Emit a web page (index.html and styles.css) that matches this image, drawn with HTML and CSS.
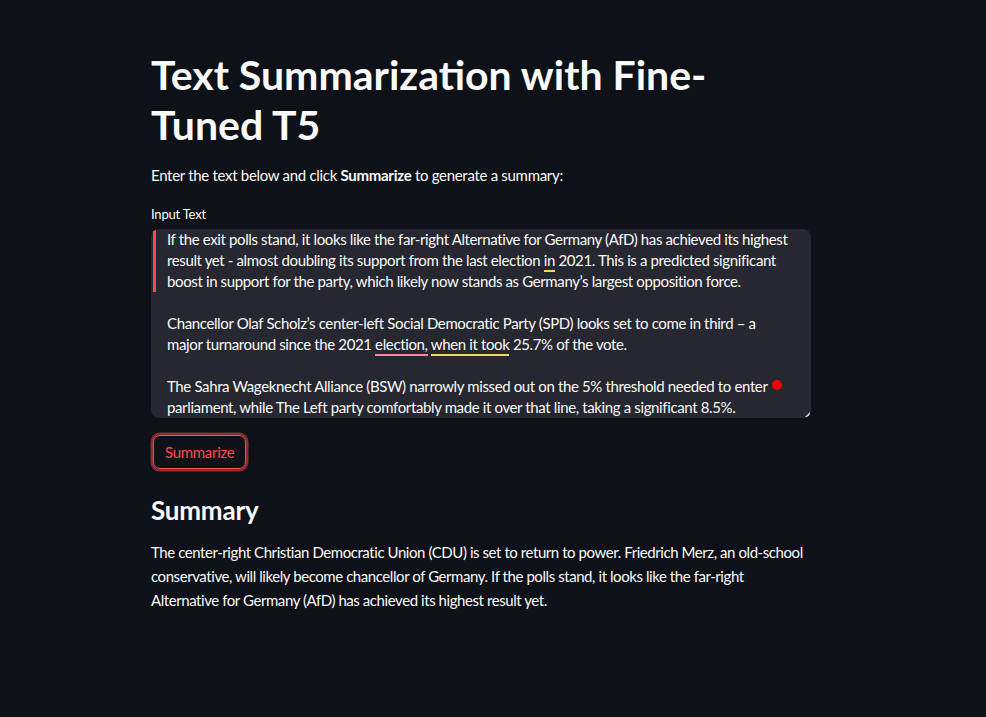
FILE: index.html
```html
<!DOCTYPE html>
<html lang="en">
<head>
<meta charset="utf-8">
<title>Text Summarization with Fine-Tuned T5</title>
<link rel="stylesheet" href="styles.css">
</head>
<body>
<main class="page">
  <h1 class="title">Text Summarization with Fine-<br>Tuned T5</h1>
  <p class="intro">Enter the text below and click <strong>Summarize</strong> to generate a summary:</p>
  <label class="label">Input Text</label>
  <div class="textarea">
    <div class="bar"></div>
    <div class="lines">
      <div>If the exit polls stand, it looks like the far-right Alternative for Germany (AfD) has achieved its highest</div>
      <div>result yet - almost doubling its support from the last election <span class="u-yellow">in</span> 2021. This is a predicted significant</div>
      <div>boost in support for the party, which likely now stands as Germany’s largest opposition force.</div>
      <div class="blank">&nbsp;</div>
      <div>Chancellor Olaf Scholz’s center-left Social Democratic Party (SPD) looks set to come in third – a</div>
      <div>major turnaround since the 2021 <span class="u-pink">election,</span> <span class="u-yellow">when it took</span> 25.7% of the vote.</div>
      <div class="blank">&nbsp;</div>
      <div>The Sahra Wageknecht Alliance (BSW) narrowly missed out on the 5% threshold needed to enter</div>
      <div>parliament, while The Left party comfortably made it over that line, taking a significant 8.5%.</div>
    </div>
    <span class="dot"></span>
    <span class="grip"></span>
  </div>
  <button class="btn">Summarize</button>
  <h3 class="subtitle">Summary</h3>
  <p class="summary">The center-right Christian Democratic Union (CDU) is set to return to power. Friedrich Merz, an old-school<br>conservative, will likely become chancellor of Germany. If the polls stand, it looks like the far-right<br>Alternative for Germany (AfD) has achieved its highest result yet.</p>
</main>
</body>
</html>
```
FILE: styles.css
```css
html, body {
  margin: 0;
  padding: 0;
  background: #0e1117;
  color: #fafafa;
  font-family: Lato, "Noto Sans", sans-serif;
  height: 100%;
}
.page {
  width: 660px;
  margin-left: 151px;
  padding-top: 50px;
  display: flex;
  flex-direction: column;
  align-items: flex-start;
}
.title {
  margin: 0;
  font-size: 41px;
  line-height: 50px;
  font-weight: 700;
  letter-spacing: 0;
  white-space: nowrap;
}
.intro {
  margin: 13px 0 0;
  font-size: 15px;
  line-height: 24px;
  letter-spacing: -0.3px;
}
.intro strong { font-weight: 700; }
.label {
  margin-top: 18px;
  font-size: 13px;
  line-height: 18px;
  letter-spacing: -0.2px;
}
.textarea {
  position: relative;
  margin-top: 6px;
  width: 660px;
  height: 189px;
  background: #262730;
  border-radius: 8px;
  overflow: hidden;
  box-sizing: border-box;
}
.bar {
  position: absolute;
  left: 2px;
  top: 1px;
  width: 3px;
  height: 62px;
  background: #ff4b4b;
}
.lines {
  padding: 0 16px;
  font-size: 15px;
  line-height: 21px;
  white-space: nowrap;
  letter-spacing: -0.37px;
}
.u-yellow { border-bottom: 2px solid #fbd26a; padding-bottom: 1px; }
.u-pink { border-bottom: 2px solid #f38ba0; padding-bottom: 1px; }
.dot {
  position: absolute;
  left: 621px;
  top: 151px;
  width: 10px;
  height: 10px;
  border-radius: 50%;
  background: #f40000;
}
.grip {
  position: absolute;
  right: 1px;
  bottom: 1px;
  width: 0;
  height: 0;
  border-left: 5px solid transparent;
  border-bottom: 5px solid #d8d8dc;
}
.btn {
  margin-top: 17px;
  margin-left: 2px;
  font-family: inherit;
  font-size: 15px;
  color: #ff4b4b;
  background: transparent;
  border: 1px solid #ff4b4b;
  border-radius: 7px;
  padding: 0 11px;
  height: 34px;
  box-shadow: 0 0 0 2.5px rgba(255, 75, 75, 0.5);
  letter-spacing: -0.3px;
}
.subtitle {
  margin: 24px 0 0;
  font-size: 26px;
  line-height: 34px;
  font-weight: 700;
  letter-spacing: -0.2px;
}
.summary {
  margin: 13px 0 0;
  font-size: 15px;
  line-height: 24px;
  letter-spacing: -0.43px;
  white-space: nowrap;
}
```
